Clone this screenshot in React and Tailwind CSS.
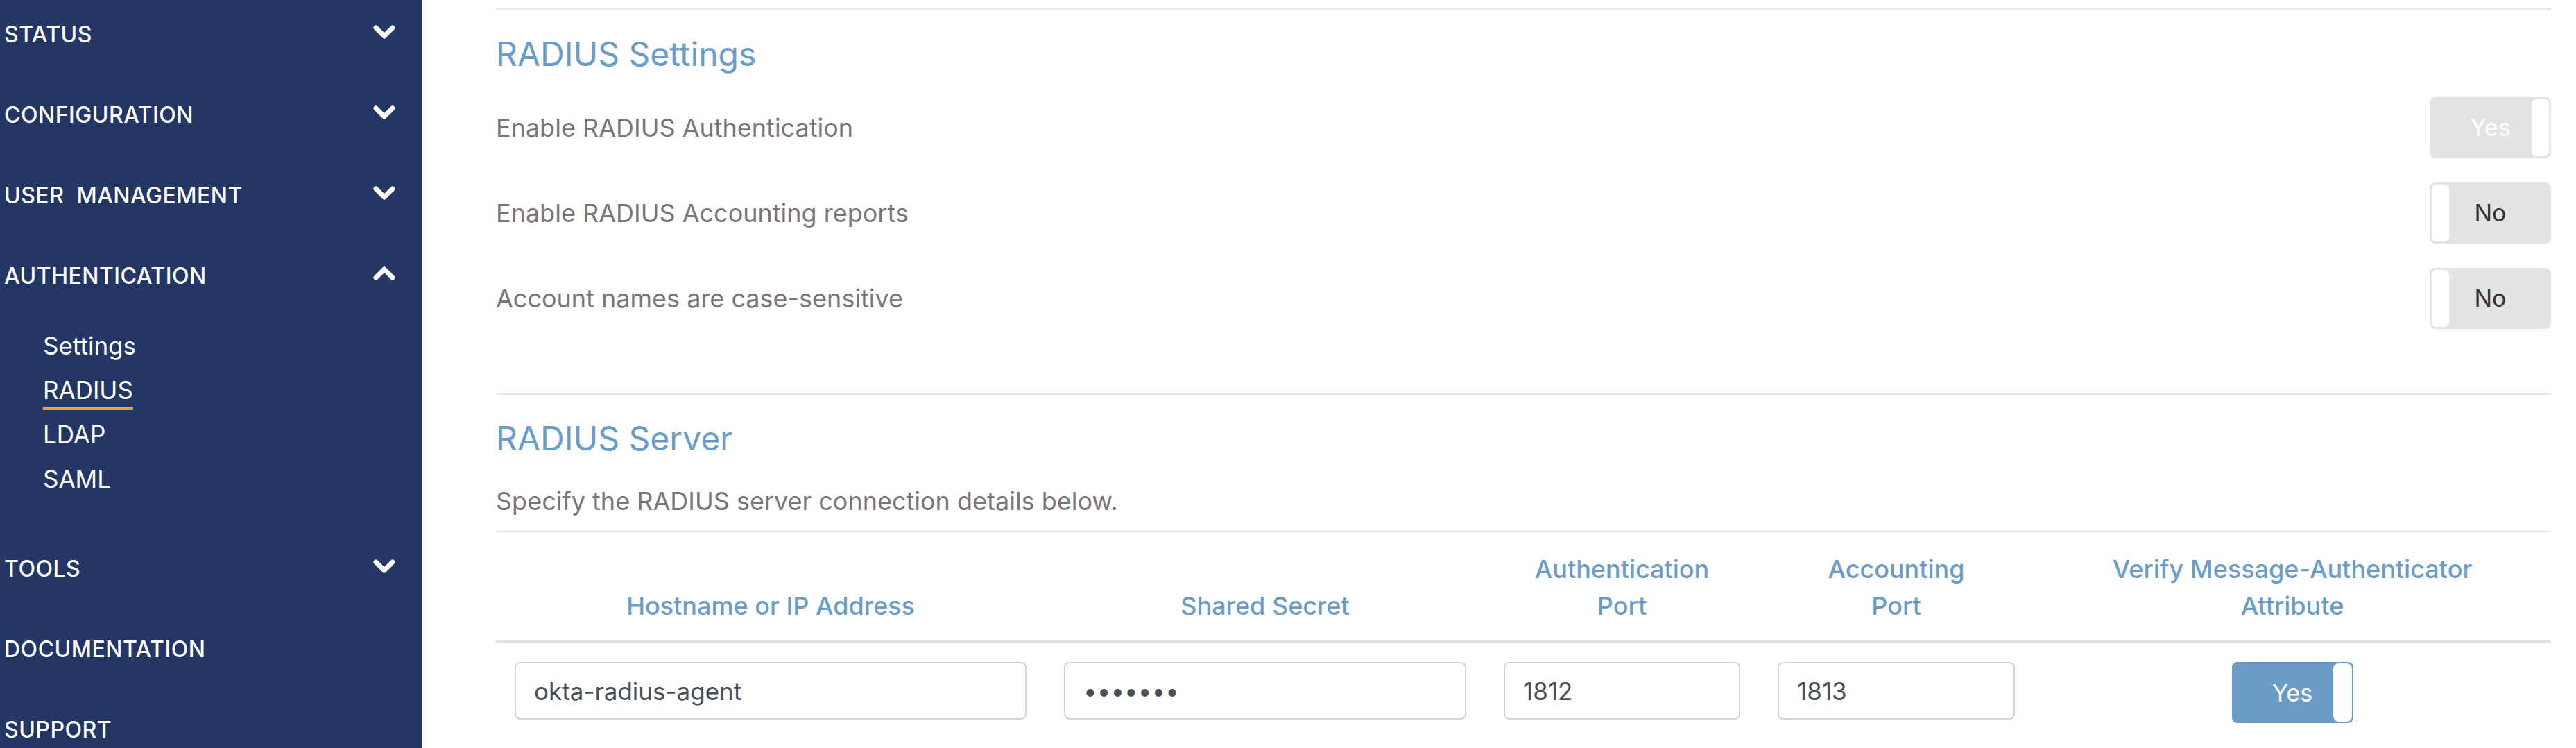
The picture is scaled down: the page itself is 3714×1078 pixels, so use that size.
import React from 'react';

const font = "font-['Inter','Noto_Sans',sans-serif]";

const navTop = [
  { label: 'STATUS', chevron: 'down' },
  { label: 'CONFIGURATION', chevron: 'down' },
  { label: 'USER\u00a0\u00a0MANAGEMENT', chevron: 'down' },
  { label: 'AUTHENTICATION', chevron: 'up' },
];

const navBottom = [
  { label: 'TOOLS', chevron: 'down' },
  { label: 'DOCUMENTATION' },
  { label: 'SUPPORT' },
];

const subItems = ['Settings', 'RADIUS', 'LDAP', 'SAML'];

const Chevron = ({ dir }) => (
  <svg width="34" height="22" viewBox="0 0 34 22" className="mb-[8px]">
    <polyline
      points={dir === 'up' ? '5,17 17,5 29,17' : '5,5 17,17 29,5'}
      fill="none"
      stroke="#ffffff"
      strokeWidth="7"
      strokeLinecap="round"
      strokeLinejoin="round"
    />
  </svg>
);

const NavItem = ({ item }) => (
  <div className="h-[116px] flex items-center justify-between pl-[6px] pr-[38px]">
    <span className="text-[32px] font-medium tracking-[0.5px] text-white">{item.label}</span>
    {item.chevron && <Chevron dir={item.chevron} />}
  </div>
);

const Sidebar = () => (
  <aside className="w-[609px] shrink-0 bg-[#243665] h-full overflow-hidden">
    <div className="-mt-[8px]">
      {navTop.map((it) => (
        <NavItem key={it.label} item={it} />
      ))}
      <ul className="pt-[10px] pb-[40px]">
        {subItems.map((s) => (
          <li key={s} className="h-[64px] flex items-center pl-[62px]">
            <span
              className={`text-[35px] text-white ${
                s === 'RADIUS' ? 'underline decoration-[#f0a930] decoration-[4px] underline-offset-[12px]' : ''
              }`}
            >
              {s}
            </span>
          </li>
        ))}
      </ul>
      {navBottom.map((it) => (
        <NavItem key={it.label} item={it} />
      ))}
    </div>
  </aside>
);

const Toggle = ({ on, label, variant }) => {
  const bg = variant === 'blue' ? 'bg-[#6a9cc6]' : 'bg-[#e3e3e3]';
  const text = variant === 'blue' || variant === 'faded' ? 'text-white' : 'text-[#333333]';
  return (
    <div className={`relative w-[175px] h-[88px] rounded-[8px] flex items-center justify-center ${bg}`}>
      <span className={`text-[34px] ${text}`}>{label}</span>
      <span
        className={`absolute top-[2px] bottom-[2px] w-[27px] rounded-[8px] bg-white ${
          on ? 'right-[2px]' : 'left-[2px]'
        } ${variant === 'blue' ? '' : 'border border-[#e6e6e6]'}`}
      />
    </div>
  );
};

const settingRows = [
  { label: 'Enable RADIUS Authentication', on: true, text: 'Yes', variant: 'faded' },
  { label: 'Enable RADIUS Accounting reports', on: false, text: 'No' },
  { label: 'Account names are case-sensitive', on: false, text: 'No' },
];

const headers = [
  ['Hostname or IP Address'],
  ['Shared Secret'],
  ['Authentication', 'Port'],
  ['Accounting', 'Port'],
  ['Verify Message-Authenticator', 'Attribute'],
];

const inputCls =
  'w-full h-[83px] border-2 border-[#ced4da] rounded-[8px] bg-white pl-[26px] text-[35px] text-[#495057] outline-none';

const Main = () => (
  <main className="flex-1 pl-[106px] pr-[36px] pt-[12px]">
    <div className="h-[2px] bg-[#e6e6e6]" />

    {/* RADIUS Settings */}
    <div className="h-[108px] pt-[20px] flex items-center">
      <h2 className="text-[48px] text-[#6a9cc8]">RADIUS Settings</h2>
    </div>
    {settingRows.map((r) => (
      <div key={r.label} className="h-[123px] flex items-center justify-between">
        <span className="text-[36px] text-[#7b7577]">{r.label}</span>
        <Toggle on={r.on} label={r.text} variant={r.variant} />
      </div>
    ))}

    {/* RADIUS Server */}
    <div className="mt-[76px] h-[2px] bg-[#e6e6e6]" />
    <div className="h-[110px] pt-[16px] flex items-center">
      <h2 className="text-[48px] text-[#6a9cc8]">RADIUS Server</h2>
    </div>
    <div className="h-[86px] flex items-center">
      <p className="text-[36px] text-[#7b7577]">Specify the RADIUS server connection details below.</p>
    </div>

    <div className="border-t-2 border-[#dee2e6]">
      <div className="grid grid-cols-[792px_634px_395px_396px_1fr] border-b-4 border-[#dee2e6] h-[159px]">
        {headers.map((h) => (
          <div
            key={h[0]}
            className="flex flex-col justify-end items-center pb-[22px] px-[20px] text-[36px] leading-[53px] font-medium text-[#6a9cc8] text-center"
          >
            {h.map((line) => (
              <span key={line}>{line}</span>
            ))}
          </div>
        ))}
      </div>
      <div className="grid grid-cols-[792px_634px_395px_396px_1fr] pt-[28px]">
        <div className="px-[27px]">
          <input className={inputCls} defaultValue="okta-radius-agent" />
        </div>
        <div className="px-[27px]">
          <input className={inputCls} type="password" defaultValue="secret1" />
        </div>
        <div className="px-[27px]">
          <input className={inputCls} defaultValue="1812" />
        </div>
        <div className="px-[27px]">
          <input className={inputCls} defaultValue="1813" />
        </div>
        <div className="flex justify-center">
          <Toggle on label="Yes" variant="blue" />
        </div>
      </div>
    </div>
  </main>
);

export default function App() {
  return (
    <div className={`w-[3714px] h-[1078px] flex bg-white overflow-hidden ${font}`}>
      <Sidebar />
      <Main />
    </div>
  );
}
